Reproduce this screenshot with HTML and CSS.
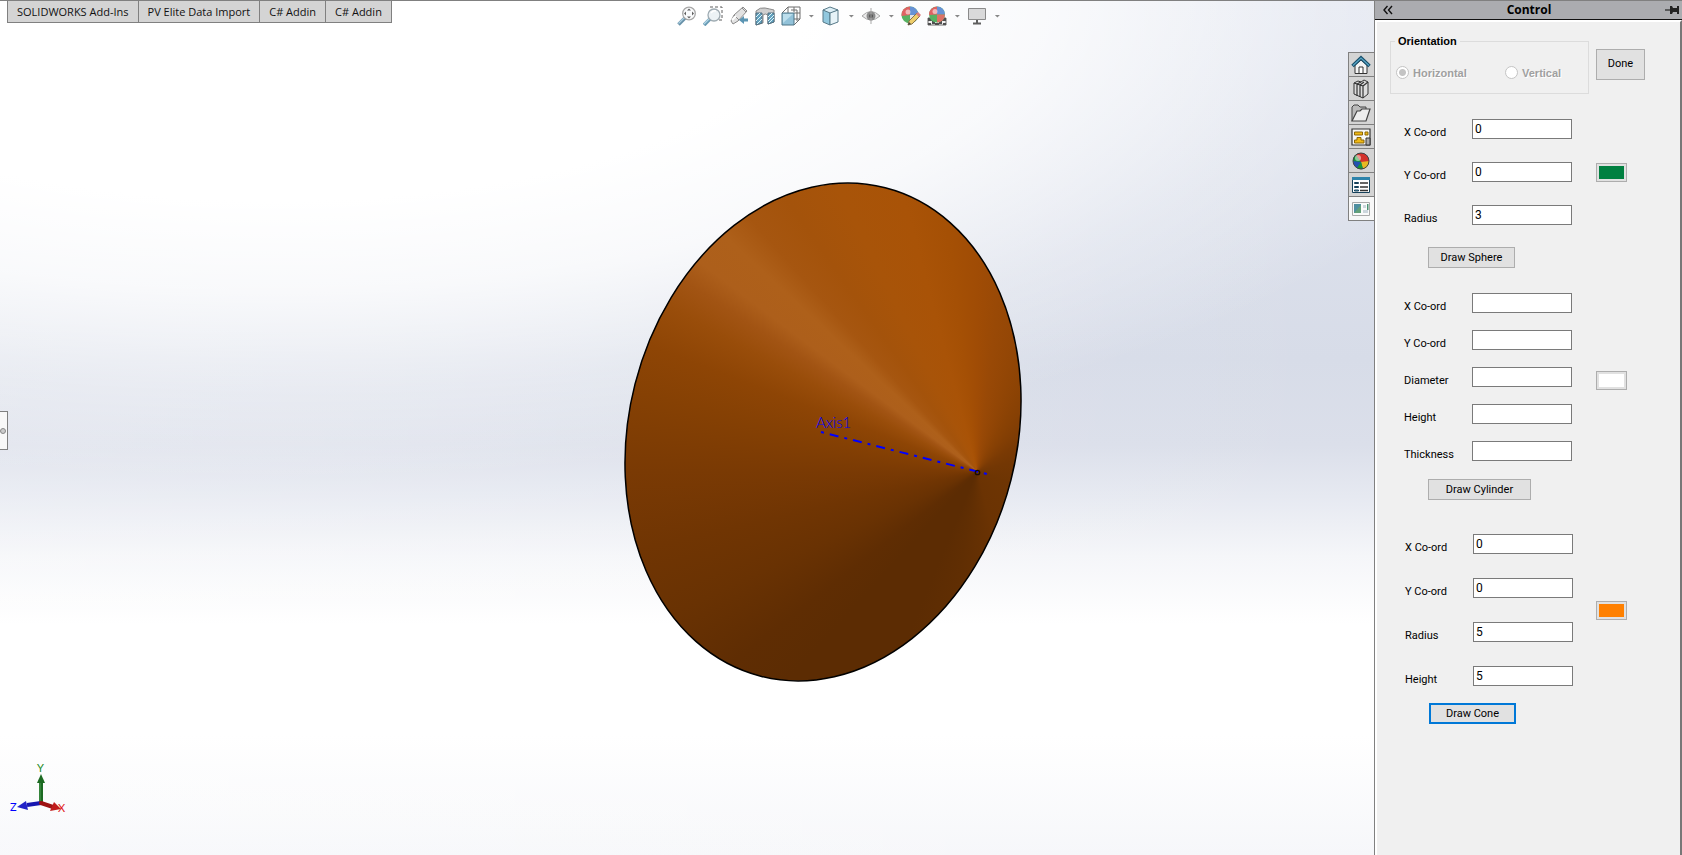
FILE: index.html
```html
<!DOCTYPE html>
<html lang="en">
<head>
<meta charset="utf-8">
<title>Control</title>
<link rel="stylesheet" href="styles.css">
</head>
<body>
<div class="app">
  <main class="viewport">
    <nav class="tabs">
      <button type="button" class="tab">SOLIDWORKS Add-Ins</button>
      <button type="button" class="tab">PV Elite Data Import</button>
      <button type="button" class="tab">C# Addin</button>
      <button type="button" class="tab">C# Addin</button>
    </nav>

    <div class="toolbar">
      <button type="button" class="tool" aria-label="Zoom to fit">
        <svg viewBox="0 0 20 20"><path d="M1.500 18.500 8 12" stroke="#4e7f9b" stroke-width="3.600"/><path d="M1.500 17.500 7 12" stroke="#9cc6dc" stroke-width="1.200"/><circle cx="12" cy="7.500" r="6.300" fill="#fafbfc" stroke="#999" stroke-width="1.300"/><path d="M12 2.500l2 2h-4zM12 12.500l2-2h-4zM7 7.500l2-2v4zM17 7.500l-2-2v4z" fill="#444"/></svg>
      </button>
      <button type="button" class="tool" aria-label="Zoom to area">
        <svg viewBox="0 0 20 20"><path d="M7 1H19V14H15" stroke="#444" stroke-dasharray="3 2" fill="none"/><path d="M1 19 7 13" stroke="#4e8aa8" stroke-width="3.600"/><path d="M1 18 6 13" stroke="#a5cfe2" stroke-width="1.200"/><circle cx="11" cy="9" r="6" fill="#e9f0f4" stroke="#8f9da5" stroke-width="1.300"/><path d="M8 7q2-3 5-2" stroke="#fff" stroke-width="1.500" fill="none"/></svg>
      </button>
      <button type="button" class="tool" aria-label="Previous view">
        <svg viewBox="0 0 20 20"><path d="M14 1l4 4-9 10-5 3-2-3 3-6z" fill="#dedede" stroke="#777"/><path d="M13 2l4 4M5 9l5 5" stroke="#777"/><path d="M3 14l4-4" stroke="#fff" stroke-width="2"/><path d="M10 14l5-4v2.500h4v3h-4V18z" fill="#3f83a6"/></svg>
      </button>
      <button type="button" class="tool" aria-label="Section view">
        <svg viewBox="0 0 20 20"><path d="M1 5Q5 1 10 2t9 2V16l-6 2V9Q10 7 8 9v8l-7 2z" fill="#c7c7c7" stroke="#777"/><path d="M1 7h6v10l-6 2zM13 7h6v9l-6 2z" fill="#4691b3" stroke="#35566a"/><path d="M1 11l4-4M1 15l6-6M2 18l5-5M13 11l4-4M13 15l6-6M14 17l5-5" stroke="#d9f1f9"/></svg>
      </button>
      <button type="button" class="tool" aria-label="View orientation">
        <svg viewBox="0 0 20 20"><path d="M1 7l6-6h12v12l-6 6M7 1v12h12M13 1v5M10 4h6v11M19 7h-6M1 19l6-6" fill="none" stroke="#555"/><path d="M1 7h12v12H1z" fill="#7fb8d3" stroke="#315c72"/><path d="M2 8h10L2 17z" fill="#b1d9e9"/></svg>
      </button>
      <span class="caret"></span>
      <button type="button" class="tool" aria-label="Display style">
        <svg viewBox="0 0 20 20"><path d="M2 4l7 2v13l-7-3z" fill="#80bfd9" stroke="#3b6375"/><path d="M9 6l8-2v12l-8 3z" fill="#e3f2f7" stroke="#3b6375"/><path d="M2 4l7-3 8 3-8 3z" fill="#d8edf5" stroke="#3b6375"/></svg>
      </button>
      <span class="caret"></span>
      <button type="button" class="tool" aria-label="Hide or show items">
        <svg viewBox="0 0 20 20"><path d="M1 10Q10 1 19 10 10 18 1 10z" fill="#e8e8e8" stroke="#999"/><circle cx="10" cy="10" r="4.500" fill="#777"/><circle cx="10" cy="10" r="2" fill="#333"/><path d="M10 2v16" stroke="#999"/></svg>
      </button>
      <span class="caret"></span>
      <button type="button" class="tool" aria-label="Edit appearance">
        <svg viewBox="0 0 20 20"><circle cx="9" cy="9" r="8.500" fill="#3aa447"/><path d="M9 9V.500A8.500 8.500 0 0 0 .600 10z" fill="#da4848"/><path d="M9 9V.500A8.500 8.500 0 0 1 17.500 9z" fill="#4c80cf"/><path d="M9 9h8.500A8.500 8.500 0 0 1 9 17.500z" fill="#ddd"/><circle cx="7" cy="6" r="2.500" fill="#fff" opacity=".55"/><path d="M7 19l1-4 8-8 3 3-8 8z" fill="#ecc652" stroke="#735c28"/><path d="M15 8l2-2 3 3-2 2z" fill="#d36b69"/><path d="M7 19l1-3 2 2z" fill="#222"/></svg>
      </button>
      <button type="button" class="tool" aria-label="Apply scene">
        <svg viewBox="0 0 20 20"><path d="M1 12h18v7H1z" fill="#eee" stroke="#555"/><path d="M1 12h4v3H1zM15 12h4v3h-4zM5 15h3v3H5zM12 15h3v3h-3zM8 17h4v2H8zM1 17h3v2H1zM16 17h3v2h-3z" fill="#333"/><circle cx="10" cy="8.500" r="8" fill="#3aa447"/><path d="M10 8.500V.500A8 8 0 0 0 2 9z" fill="#da4848"/><path d="M10 8.500V.500a8 8 0 0 1 8 8z" fill="#4c80cf"/><path d="M10 8.500h8a8 8 0 0 1-8 8z" fill="#d75a4c"/><circle cx="8" cy="5.500" r="2.500" fill="#fff" opacity=".55"/></svg>
      </button>
      <span class="caret"></span>
      <button type="button" class="tool" aria-label="View settings">
        <svg viewBox="0 0 20 20"><path d="M1.500 2.500h17v11h-17z" fill="#d4d4d4" stroke="#777"/><path d="M10 14v3M6 17.500h8" stroke="#444" stroke-width="2"/></svg>
      </button>
      <span class="caret"></span>
    </div>

    <div class="model">
      <div class="cone"></div>
      <svg class="axis" viewBox="0 0 400 500">
        <ellipse cx="200" cy="250" rx="194" ry="252" transform="rotate(14.300 200 250)" fill="none" stroke="#000" stroke-width="1.500"/>
        <path d="M198 250 364 292" stroke="#00f" stroke-width="2" stroke-dasharray="3 6 9 6"/>
        <circle cx="354.500" cy="290.500" r="2.200" fill="none" stroke="#1b0c00" stroke-width="1.300"/>
        <text class="axis-name" x="193" y="246">Axis1</text>
      </svg>
    </div>

    <button type="button" class="flap" aria-label="Expand tree"><span class="knob"></span></button>

    <svg class="triad" viewBox="0 0 60 60">
      <path d="M31 43V20" stroke="#1c6a22" stroke-width="4"/><path d="M30 43V20" stroke="#4fa055"/>
      <path d="M31 13l4 9h-8z" fill="#1c6a22"/>
      <path d="M31 42 17 44" stroke="#1717b0" stroke-width="4"/><path d="M7 46l9-6 2 9z" fill="#2323c8"/>
      <path d="M31 42l12 4" stroke="#9d1313" stroke-width="4"/><path d="M51 48l-11 2 4-9z" fill="#c01c1c"/>
      <circle cx="31" cy="42" r="2" fill="#a01010"/>
      <text class="mark y" x="27" y="11">Y</text><text class="mark z" x="0" y="50">Z</text><text class="mark x" x="48" y="51">X</text>
    </svg>

    <div class="taskpane">
      <button type="button" class="task" aria-label="Resources"><svg viewBox="0 0 20 20"><path d="M4 10v8.500h12V10l-6-5z" fill="#f4f4f4" stroke="#333"/><path d="M1.500 11 10 3l8.500 8" fill="none" stroke="#194f6b" stroke-width="3.600"/><path d="M2 10.500 10 3l8 7.500" fill="none" stroke="#5aa7c8" stroke-width="1.200"/><path d="M8 18v-6h4v6" fill="#fff" stroke="#333"/></svg></button>
      <button type="button" class="task" aria-label="Design library"><svg viewBox="0 0 20 20"><path d="M3 4l4-2 3 1 3-2 4 2v12l-5 4-9-4z" fill="#ddd" stroke="#333"/><path d="M3 4l3 1v12M6 5l4-2M6 5l3 1v12M9 6l4-3M9 6l3 1v12M12 7l5-4" fill="none" stroke="#333" stroke-width="1.200"/></svg></button>
      <button type="button" class="task" aria-label="File explorer"><svg viewBox="0 0 20 20"><path d="M1 18V4l2-2h4l2 2h6v4" fill="#bbb" stroke="#444"/><path d="M1 18 6 8h3l2-2h8l-4 12z" fill="#eee" stroke="#444" stroke-width="1.200"/></svg></button>
      <button type="button" class="task" aria-label="View palette"><svg viewBox="0 0 20 20"><path d="M1 2h18v16H1z" fill="#f7f7f7" stroke="#333" stroke-width="1.200"/><path d="M3.500 5h8v3h-8zM14 5h3v3h-3zM6 10.500h4v2.500h3v3H3.500v-3H6z" fill="#f0b916" stroke="#8b6606"/><path d="M15 11h4v7h-4z" fill="#aaa" stroke="#333"/></svg></button>
      <button type="button" class="task" aria-label="Appearances"><svg viewBox="0 0 20 20"><circle cx="10" cy="10" r="8" fill="#2450b0"/><path d="M10 11V2a8 8 0 0 0-8 8z" fill="#189536"/><path d="M10 11 5 4a8 8 0 0 1 5-2z" fill="#d3322c"/><path d="M10 11V2a8 8 0 0 1 8 9z" fill="#d3322c"/><path d="M10 11l8-1a8 8 0 0 1-6 8z" fill="#e8b921"/><path d="M10 11l2 7a8 8 0 0 1-6-1z" fill="#189536"/><circle cx="7" cy="7" r="3" fill="#fff" opacity=".5"/><circle cx="10" cy="10" r="8" fill="none" stroke="#444"/></svg></button>
      <button type="button" class="task" aria-label="Custom properties"><svg viewBox="0 0 20 20"><path d="M1.500 2.500h17v15h-17z" fill="#fff" stroke="#16415a"/><path d="M1 2h18v3H1z" fill="#2e83aa"/><path d="M3.500 7.500h4v1h-4zM3.500 11.500h4v1h-4zM3.500 15h4v1h-4z" fill="#7fc4de" stroke="#16415a"/><path d="M9 8h8M9 12h8M9 15.500h8" stroke="#333" stroke-width="1.300"/></svg></button>
      <button type="button" class="task current" aria-label="Add-in"><svg viewBox="0 0 20 20"><path d="M1.500 3.500h17v13h-17z" fill="#fafafa" stroke="#aaa"/><path d="M3 5h7v9H3z" fill="#4f8fa0"/><path d="M3 14 10 6v8z" fill="#63a079"/><path d="M12 6h3v3h-3zM12 11h5v3h-5z" fill="#ccd6dc"/><path d="M16 5h1.500v6H16z" fill="#4a9272"/></svg></button>
    </div>
  </main>

  <aside class="panel">
    <header class="panel-head">
      <button type="button" class="head-btn" aria-label="Collapse"><svg viewBox="0 0 12 12"><path d="M5.500 2 2 6l3.500 4M10 2 6.500 6 10 10" fill="none" stroke="#111" stroke-width="1.400"/></svg></button>
      <h1 class="panel-title">Control</h1>
      <button type="button" class="head-btn pin" aria-label="Pin"><svg viewBox="0 0 16 12"><path d="M1 6h6" stroke="#222" stroke-width="1.200"/><path d="M6 2h2l1 2h4V2h2v8h-2V8H9l-1 2H6z" fill="#222"/></svg></button>
    </header>
    <form class="panel-body">
      <div class="top-row">
        <fieldset class="orientation" disabled>
          <legend>Orientation</legend>
          <label class="choice"><input type="radio" name="dir" checked>Horizontal</label>
          <label class="choice"><input type="radio" name="dir">Vertical</label>
        </fieldset>
        <button type="button" class="btn done">Done</button>
      </div>

      <section class="shape sphere">
        <div class="fields">
          <label for="sx">X Co-ord</label><input id="sx" type="text" value="0">
          <label for="sy">Y Co-ord</label><input id="sy" type="text" value="0">
          <label for="sr">Radius</label><input id="sr" type="text" value="3">
        </div>
        <button type="button" class="swatch" aria-label="Sphere colour"><span class="chip green"></span></button>
        <button type="button" class="btn draw">Draw Sphere</button>
      </section>

      <section class="shape cylinder">
        <div class="fields">
          <label for="cx">X Co-ord</label><input id="cx" type="text">
          <label for="cy">Y Co-ord</label><input id="cy" type="text">
          <label for="cd">Diameter</label><input id="cd" type="text">
          <label for="ch">Height</label><input id="ch" type="text">
          <label for="ct">Thickness</label><input id="ct" type="text">
        </div>
        <button type="button" class="swatch" aria-label="Cylinder colour"><span class="chip white"></span></button>
        <button type="button" class="btn draw wide">Draw Cylinder</button>
      </section>

      <section class="shape frustum">
        <div class="fields">
          <label for="nx">X Co-ord</label><input id="nx" type="text" value="0">
          <label for="ny">Y Co-ord</label><input id="ny" type="text" value="0">
          <label for="nr">Radius</label><input id="nr" type="text" value="5">
          <label for="nh">Height</label><input id="nh" type="text" value="5">
        </div>
        <button type="button" class="swatch" aria-label="Cone colour"><span class="chip orange"></span></button>
        <button type="button" class="btn draw primary">Draw Cone</button>
      </section>
    </form>
  </aside>
</div>
</body>
</html>
```

FILE: styles.css
```css
* { box-sizing: border-box; }
body {
  margin: 0;
  font: 11px/14px Roboto, sans-serif;
  color: #000;
}
button, input { font: inherit; color: inherit; }
button { padding: 0; margin: 0; border: 0; background: none; }
svg { display: block; }

.app {
  display: flex;
  min-height: 100vh;
  border-top: 1px solid #808080;
}

/* ---- graphics area ---- */
.viewport {
  position: relative;
  flex: 1;
  overflow: hidden;
  background:
    radial-gradient(ellipse 86% 52% at 20% 0%, #fff 45%, rgba(255, 255, 255, .8) 65%, rgba(255, 255, 255, .3) 88%, rgba(255, 255, 255, 0) 108%),
    linear-gradient(90deg, rgba(255, 255, 255, .2), rgba(255, 255, 255, 0)),
    linear-gradient(#e2e6f0 0, #d7dce8 42%, #dbdfea 52%, #e6e9f1 58%, #f5f6f9 65%, #fff 73%, #fff 86%, #f6f7fa 100%);
}
.tabs {
  display: flex;
  width: max-content;
  margin-left: 7px;
  border-left: 1px solid #808080;
}
.tab {
  height: 22px;
  padding: 0 9px;
  border-right: 1px solid #808080;
  border-bottom: 1px solid #808080;
  background: #d4d4d4;
  font: 11px/16px "Open Sans", sans-serif;
  color: #111;
}

.toolbar {
  position: absolute;
  top: 5px;
  left: 49.3%;
  display: flex;
  align-items: center;
  gap: 6px;
}
.tool { width: 20px; height: 20px; opacity: .85; }
.caret {
  width: 8px;
  height: 3px;
  background: #888;
  clip-path: polygon(1px 0, 7px 0, 4px 3px);
}

.model {
  position: absolute;
  left: 59.9%;
  top: 50.5%;
  width: 400px;
  height: 500px;
  transform: translate(-50%, -50%);
}
.cone {
  position: absolute;
  left: 6px;
  top: -2px;
  width: 388px;
  height: 504px;
  border-radius: 50%;
  transform: rotate(14.3deg);
  background: conic-gradient(from -14.3deg at 91% 50%,
    #a04c05 0deg, #994906 7deg, #8a4204 29deg, #7a3a04 55deg, #733704 75deg,
    #6e3503 110deg, #6b3303 165deg, #602e03 190deg, #5c2c03 203deg, #5c2c03 222deg,
    #5f2d03 232deg, #693203 245deg, #703503 257deg, #7a3a04 270deg, #864104 283deg,
    #8e4505 291deg, #994d0a 298deg, #a25413 303deg, #ad5f1b 307deg, #ae601a 313deg,
    #a65610 318deg, #a4530b 325deg, #a85409 334deg, #a95307 345deg, #a55005 353deg, #a04c05 360deg);
}
.axis { position: relative; width: 400px; height: 500px; }
.axis-name { font: 300 15px Lato, sans-serif; fill: #00f; }

.flap {
  position: absolute;
  left: -1px;
  top: 410px;
  width: 9px;
  height: 39px;
  border: 1px solid #808080;
  background: #f8f8f8;
}
.knob {
  display: block;
  width: 6px;
  height: 6px;
  border: 1px solid #888;
  border-radius: 50%;
  background: #ccc;
}
.triad {
  position: absolute;
  left: 10px;
  bottom: 34px;
  width: 60px;
  height: 60px;
}
.mark { font: 11px Lato, sans-serif; }
.x { fill: #e02020; }
.y { fill: #1c8a22; }
.z { fill: #00f; }

.taskpane {
  position: absolute;
  top: 51px;
  right: 0;
  display: flex;
  flex-direction: column;
  border: 1px solid #808080;
  border-right: 0;
}
.task {
  display: grid;
  place-items: center;
  width: 25px;
  height: 24px;
  padding-right: 1px;
  border-bottom: 1px solid #808080;
  background: #d4d4d4;
}
.task svg { width: 20px; height: 20px; }
.task.current { height: 23px; border-bottom: 0; background: #f8f8f8; }

/* ---- control panel ---- */
.panel {
  display: flex;
  flex-direction: column;
  flex: 0 0 308px;
  border-left: 1px solid #808080;
}
.panel-head {
  display: flex;
  align-items: center;
  justify-content: space-between;
  height: 19px;
  padding: 0 2px 0 7px;
  border-bottom: 1px solid #111;
  background: #abacb0;
}
.panel-title { margin: 0; font: bold 12px/16px "Open Sans", sans-serif; }
.head-btn { width: 12px; }
.pin { width: 16px; }
.panel-body {
  flex: 1;
  padding: 12px 0 0 13px;
  border: 2px solid #fff;
  border-right: 2px solid #777;
  border-bottom: 0;
  background: #f0f0f0;
}
.top-row { display: flex; align-items: center; gap: 7px; }
.orientation {
  display: flex;
  width: 199px;
  height: 60px;
  margin: 0;
  padding: 18px 0 0 5px;
  border: 1px solid #dcdcdc;
}
.orientation legend { padding: 0 3px; margin-left: -1px; font: bold 11px/14px "Liberation Sans", sans-serif; }
.choice {
  display: flex;
  align-items: flex-start;
  flex: 0 0 109px;
  gap: 4px;
  font: bold 11px/14px "Liberation Sans", sans-serif;
  color: #a0a0a0;
  text-shadow: 1px 1px #fff;
}
.choice:last-child { flex-basis: auto; }
.choice input {
  appearance: none;
  width: 13px;
  height: 13px;
  margin: 0;
  border: 1px solid #c4c4c4;
  border-radius: 50%;
  background: #fff;
}
.choice input:checked { background: radial-gradient(circle, #c4c4c4 3px, #fff 4px); }

.btn {
  border: 1px solid #adadad;
  background: #e1e1e1;
}
.done { width: 49px; height: 31px; }

.shape {
  display: grid;
  grid-template-columns: 168px auto;
  column-gap: 24px;
  justify-content: start;
  padding-left: 14px;
}
.fields {
  display: grid;
  grid-template-columns: 68px 100px;
  row-gap: 24px;
}
.fields label { padding-top: 7px; height: 20px; }
.fields input {
  width: 100px;
  height: 20px;
  padding: 0 2px 1px;
  border: 1px solid #7a7a7a;
  background: #fff;
  font-size: 12px;
}
.swatch {
  align-self: center;
  width: 31px;
  height: 19px;
  padding: 2px;
  border: 1px solid #adadad;
  background: #e1e1e1;
}
.chip { display: block; height: 13px; }
.green { background: #008040; }
.white { background: #fff; }
.orange { background: #ff8000; }
.draw {
  grid-column: 1;
  width: 87px;
  height: 21px;
  margin: 22px 0 0 24px;
}
.wide { width: 103px; }

.sphere { margin-top: 25px; }
.sphere .fields { row-gap: 23px; }
.cylinder { margin-top: 25px; }
.cylinder .fields { row-gap: 17px; }
.cylinder .swatch { margin-top: 7px; }
.cylinder .draw { margin-top: 18px; }
.frustum { margin-top: 34px; padding-left: 15px; column-gap: 23px; }
.frustum .primary { border: 2px solid #0078d7; margin-top: 17px; }
```
